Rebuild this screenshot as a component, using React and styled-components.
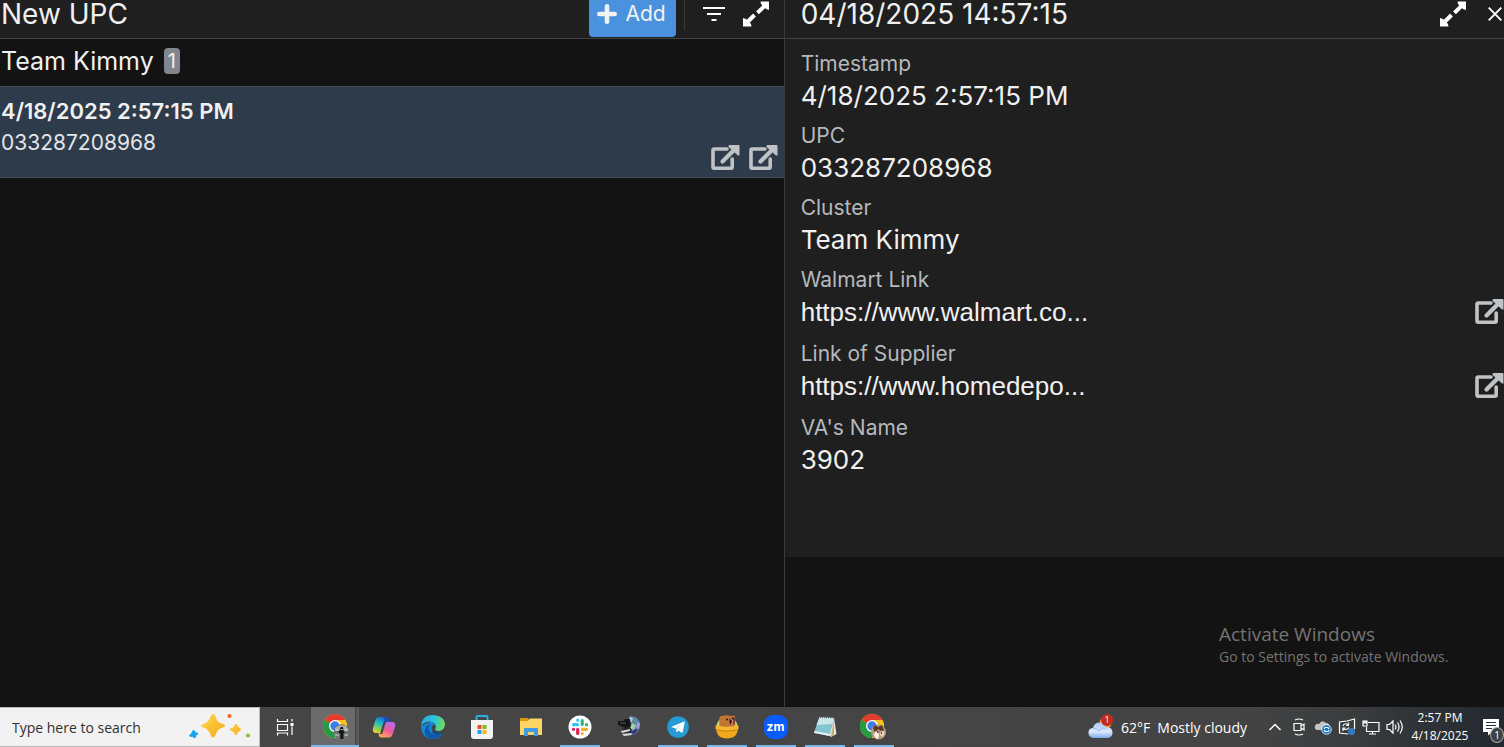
import React from 'react';
import styled, { createGlobalStyle, css } from 'styled-components';

const fields = [
  { label: 'Timestamp', value: '4/18/2025 2:57:15 PM' },
  { label: 'UPC', value: '033287208968' },
  { label: 'Cluster', value: 'Team Kimmy' },
  { label: 'Walmart Link', value: 'https://www.walmart.co...', link: true },
  { label: 'Link of Supplier', value: 'https://www.homedepo...', link: true },
  { label: "VA's Name", value: '3902' },
];

const ExternalIcon = () => (
  <svg width="30" height="28" viewBox="0 0 30 28" fill="none" stroke="currentColor" strokeWidth="3.6">
    <path d="M17 5H4.2Q3 5 3 6.2V23Q3 24.2 4.2 24.2H21Q22.2 24.2 22.2 23V15" strokeLinecap="round" />
    <path d="M12.5 17.5L24.5 5.5" strokeLinecap="round" strokeWidth="4.2" />
    <path d="M19 1H28.5Q29.500 1 29.500 2V11.500H28L18.300 2.800Z" fill="currentColor" stroke="none" />
  </svg>
);

const ExpandIcon = () => (
  <svg width="26" height="26" viewBox="0 0 26 26" fill="#fff">
    <path d="M17.5 0.5H26V9L23 8L18 3Z" />
    <path d="M0 17V25.5H8.5L8 23L3 18Z" />
    <path d="M14.500 11.800L21.500 4.800M4.500 21L11.500 14" stroke="#fff" strokeWidth="4" fill="none" />
  </svg>
);

const FilterIcon = () => (
  <svg width="22" height="16" viewBox="0 0 22 16" stroke="#fff" strokeWidth="2.2">
    <path d="M0 2H22M4 8H18M8.5 14H13.5" />
  </svg>
);

const PlusIcon = () => (
  <svg width="20" height="20" viewBox="0 0 20 20" stroke="#f2f2f2" strokeWidth="4.600" strokeLinecap="round">
    <path d="M10 2.300V17.700M2.300 10H17.700" />
  </svg>
);

const CloseIcon = () => (
  <svg width="14" height="14" viewBox="0 0 14 14" stroke="#fff" strokeWidth="1.9">
    <path d="M0.7 0.7L13.3 13.3M13.3 0.7L0.7 13.3" />
  </svg>
);

const TaskViewIcon = () => (
  <svg width="18" height="18" viewBox="0 0 18 18" fill="none" stroke="#fff" strokeWidth="1.2">
    <path d="M1.5 1V3.5H11.5V1M1.5 6.5H11.5V12.5H1.5ZM1.5 17.500V15H11.500V17.500M16 1V3.500M16 8.500V17" />
    <path d="M14.500 5H17.500V8H14.500Z" fill="#fff" stroke="none" />
  </svg>
);

const SparkleIcon = () => (
  <svg width="64" height="30" viewBox="0 0 64 30">
    <defs>
      <linearGradient id="gold" x1="0" y1="0" x2="1" y2="1">
        <stop offset="0" stopColor="#ffd84a" />
        <stop offset="1" stopColor="#f5a91c" />
      </linearGradient>
    </defs>
    <path d="M24 2Q26 2 27 6Q28.500 10.500 32.500 11.500Q36 12.500 36 13.500Q36 15 32 16Q28.500 17.500 27 21.500Q26 25.500 24 25.500Q22.500 25.500 21 21.500Q19.500 17.500 16 16Q12 15 12 13.500Q12 12.500 16 11.500Q19.500 10 21 6Q22.500 2 24 2Z" fill="url(#gold)" />
    <path d="M47 12Q48.500 16 52 17.500Q48.500 19 47 23Q45.500 19 41 17.500Q45.500 16 47 12Z" fill="url(#gold)" stroke="#fbbd22" />
    <path d="M4.500 18L6.500 20.500L9 21.500L7 23.500L6 26L3.500 24.500L0.500 24L2.500 21.500Z" fill="#14a5f5" stroke="#14a5f5" strokeLinejoin="round" />
    <circle cx="40.500" cy="4" r="2.100" fill="#ef6533" />
    <circle cx="59" cy="23.500" r="2.100" fill="#84c44b" />
  </svg>
);

const ChromeIcon = ({ cat }) => (
  <svg width="27" height="28" viewBox="0 0 27 28">
    <circle cx="12" cy="13" r="12" fill="#fbc116" />
    <path d="M12 13L1.600 7A12 12 0 0 1 22.400 7Z" fill="#e33b2e" />
    <path d="M12 13L1.600 7A12 12 0 0 0 12 25L17 16Z" fill="#259b45" />
    <path d="M12 7H22.400A12 12 0 0 1 12 25L17.200 16Z" fill="#fbc116" />
    <circle cx="12" cy="13" r="6" fill="#fff" />
    <circle cx="12" cy="13" r="4.700" fill="#3f7de8" />
    {cat ? (
      <g>
        <circle cx="18.500" cy="19" r="7.500" fill="#b69a80" />
        <path d="M13 15L15 12L18 14L22 12L24 17L21 18L18 16L15 20Z" fill="#5b3825" />
        <path d="M14 21Q15 17 18 19Q20 22 18 26Q14 25 14 21Z" fill="#fff0df" />
        <path d="M21 18L25 19L23 24L20 22Z" fill="#ead6bd" />
        <path d="M17 19H18.500M21 20H22" stroke="#252020" strokeWidth="1.500" />
      </g>
    ) : (
      <g>
        <circle cx="18.500" cy="19" r="7.700" fill="#6d7674" />
        <path d="M12 15L16 12.500L22 12.500L25 16L25 18L12 18Z" fill="#a8b5b2" />
        <path d="M17.500 14H20L20.500 17.500L22 19.500L20.500 20L20.500 26H17L17.500 21L15 19L16.500 17.500Z" fill="#17151b" />
        <path d="M12 22H16M21.500 22H25M13 17H15.500M22 17H24" stroke="#d4d6d6" strokeWidth="1.200" />
        <path d="M17.500 16.500H20" stroke="#c99a8c" />
      </g>
    )}
  </svg>
);

const CopilotIcon = () => (
  <svg width="24" height="24" viewBox="0 0 24 24">
    <defs>
      <linearGradient id="copA" x1="0.700" y1="0" x2="0.200" y2="1">
        <stop offset="0" stopColor="#1452cf" />
        <stop offset="0.450" stopColor="#25bfc3" />
        <stop offset="0.750" stopColor="#8dcf50" />
        <stop offset="1" stopColor="#ffd029" />
      </linearGradient>
      <linearGradient id="copB" x1="0.700" y1="0" x2="0.200" y2="1">
        <stop offset="0" stopColor="#bd69ed" />
        <stop offset="0.500" stopColor="#ed5a99" />
        <stop offset="1" stopColor="#ffaf50" />
      </linearGradient>
    </defs>
    <path d="M6.500 2H15Q17.300 2 18 5L18.500 7H15Q13 7 12.300 9.500L10 17.500Q9.200 19 6.500 18H4Q0 18 1 13L3.500 5Q4.500 2 6.500 2Z" fill="url(#copA)" />
    <path d="M14 7H20Q24 7 23 12L20.500 19.500Q19.500 22.500 17 22.500H9Q6.500 22 6.500 18Q9.300 18.500 10.500 15L12.500 9Z" fill="url(#copB)" />
    <path d="M12 2H15Q17.500 2 18.300 7H15Q13.500 7 12.500 9Z" fill="#1c4eb8" />
    <path d="M10 12L11.500 7.500Q12.200 6 14 6.500L10.500 18Q9.500 20 8 19Z" fill="#444" />
  </svg>
);

const EdgeIcon = () => (
  <svg width="24" height="24" viewBox="0 0 24 24">
    <defs>
      <linearGradient id="edgeA" x1="0" y1="0.300" x2="1" y2="0.500">
        <stop offset="0" stopColor="#28a9ec" />
        <stop offset="0.550" stopColor="#2dc5d6" />
        <stop offset="1" stopColor="#70df58" />
      </linearGradient>
    </defs>
    <path d="M0 11Q0 22 10 24Q18 25 21.500 18.500L14 17L13 5Z" fill="#1686d8" />
    <path d="M0 11Q1 0 12 0Q24 1 24 10Q23 16 16.500 16Q13 15.500 14.700 12.500Q15 7 9 6.500Q3 6.500 0 11Z" fill="url(#edgeA)" />
    <path d="M10 9Q6 12 9 17Q13 22 21.500 18.500Q17 24.500 11 24Q2 22 4 14Q5.500 9.500 10 9Z" fill="#0d5aab" />
    <path d="M14.800 11.500Q12.500 15.500 17 16.700Q20.500 17 23 15L21.500 17.500Q14 19.500 11.500 16Q9.500 12 12 10Q14 9.500 14.800 11.500Z" fill="#444" />
    <path d="M11.500 16Q15 19 21.500 17.500V18.500Q14 22 10.500 17Z" fill="#0c4c94" />
  </svg>
);

const StoreIcon = () => (
  <svg width="24" height="24" viewBox="0 0 24 24">
    <path d="M6.500 6V2Q6.500 1 7.500 1H16.500Q17.500 1 17.500 2V6" fill="none" stroke="#28aee5" strokeWidth="2" />
    <path d="M1 5H23V21Q23 24 20 24H4Q1 24 1 21Z" fill="#f2f2f2" />
    <path d="M7.500 10H11.500V14H7.500Z" fill="#ef4c24" />
    <path d="M12.500 10H16.500V14H12.500Z" fill="#7ebb16" />
    <path d="M7.500 15H11.500V19H7.500Z" fill="#1a9ee9" />
    <path d="M12.500 15H16.500V19H12.500Z" fill="#fbb70f" />
  </svg>
);

const FolderIcon = () => (
  <svg width="24" height="24" viewBox="0 0 24 24">
    <path d="M1 3H9L11 6H22V11H1Z" fill="#dc980c" />
    <path d="M1 6H9L11 3.500H23V20H1Z" fill="#fcd564" />
    <path d="M5 21V14Q5 13 6 13H18Q19 13 19 14V21H15V17H9V21Z" fill="#3f9be2" />
  </svg>
);

const SlackIcon = () => (
  <svg width="24" height="24" viewBox="0 0 24 24" strokeWidth="3.200" strokeLinecap="round">
    <circle cx="12" cy="12" r="11.500" fill="#fff" />
    <path d="M5.500 9.700H9.500M9.700 5.200V5.300" stroke="#36c5f0" />
    <path d="M14.200 5.500V9.500M18.500 9.700H18.600" stroke="#2eb67d" />
    <path d="M14.400 14.300H18.500M14.200 18.500V18.600" stroke="#ecb22e" />
    <path d="M9.700 14.400V18.500M5.400 14.300H5.500" stroke="#e01e5a" />
  </svg>
);

const WebcamIcon = () => (
  <svg width="24" height="24" viewBox="0 0 24 24">
    <path d="M13 1Q22 1 23 9Q23 17 17 20L12 18L10 8Z" fill="#6672a8" />
    <path d="M13 2L16 3L15 7L11 6Z" fill="#b9cbd2" />
    <path d="M17 2L21 5L19 9L16 7Z" fill="#4a9a9b" />
    <path d="M15 8L19 10L17 15L13 13Z" fill="#9bd0a6" />
    <path d="M20 7L23 8L22 14L19 13Z" fill="#a59ad8" />
    <path d="M17 15L21 14L18 19L14 18Z" fill="#33346f" />
    <path d="M1 6L7 6L8 4L13 4L14 11L11 14L6 12L1 10Z" fill="#131518" />
    <path d="M6 13L13 12L15 16L13 19L5 18Z" fill="#24262d" />
    <path d="M4 16L13 14V16L5 18ZM5 19L14 18L15 20L7 21Z" fill="#d5dbe0" />
    <path d="M3 8H9" stroke="#454d54" strokeWidth="1.200" />
  </svg>
);

const TelegramIcon = () => (
  <svg width="24" height="24" viewBox="0 0 24 24">
    <circle cx="12" cy="12" r="10.800" fill="#249bd2" />
    <path d="M5 12L18 6.500Q19 6.200 18.700 7.500L16.700 17.200Q16.400 18.200 15.400 17.500L12.500 15.400L11 17Q10.300 17.400 10.200 16.500L9.700 13.500Z" fill="#fff" />
    <path d="M9.700 13.500L16 8.800L11 14L10.500 16.500Z" fill="#b8d5e7" />
  </svg>
);

const BearIcon = () => (
  <svg width="24" height="26" viewBox="0 0 24 26">
    <circle cx="12" cy="13" r="10.500" fill="#cfe07a" />
    <path d="M4 14L4.500 3.500Q4.500 1.500 6.500 2Q12 0.500 16 2Q19.500 0.500 20 3L20.500 13Q12 17 4 14Z" fill="#c17434" />
    <path d="M14.500 5Q16.500 2.500 19.500 4V9Q18 11.500 15.500 10.500Q14 8 14.500 5Z" fill="#2a1712" />
    <path d="M16.500 6L18.500 5L18.500 9L17 10Z" fill="#e97f78" />
    <path d="M15.500 5H17M16 10H17.500" stroke="#fff" />
    <path d="M1 13Q12 16 23 13Q23 24.500 12 24.500Q1 24.500 1 13Z" fill="#f0a81c" />
    <path d="M0.500 12Q1 10.500 3 11.500Q12 14 21 11.500Q23 10.500 23.500 12V15Q12 18 0.500 15Z" fill="#f5b52e" />
    <path d="M2 16Q12 18.500 22 16" fill="none" stroke="#cf8210" />
    <circle cx="12" cy="5.500" r="1" fill="#201b17" />
  </svg>
);

const NotepadIcon = () => (
  <svg width="24" height="24" viewBox="0 0 24 24">
    <path d="M21 3L23.500 19L18 22L16 20Z" fill="#e9e5da" />
    <path d="M21 4L21 20L18 21.500Z" fill="#c2ae77" />
    <path d="M6.500 2L21 3L16.500 21L1 17.500Z" fill="#86c5cf" />
    <path d="M6.500 2L21 3L19.500 9L3.500 10Z" fill="#c9e6e9" />
    <path d="M1.500 16L17 19L16.500 21L1 18Z" fill="#e4f2f3" />
    <path d="M7 2.500H21" stroke="#5e6a6d" strokeWidth="1.500" strokeDasharray="1 1" />
  </svg>
);

const WeatherIcon = () => (
  <svg width="26" height="24" viewBox="0 0 26 24">
    <defs>
      <linearGradient id="cloud" x1="0" y1="0" x2="0" y2="1">
        <stop offset="0" stopColor="#a9c8fb" />
        <stop offset="0.600" stopColor="#dce9fd" />
        <stop offset="1" stopColor="#78a9ed" />
      </linearGradient>
    </defs>
    <circle cx="17.500" cy="8" r="6" fill="#f49b22" />
    <path d="M5 23Q0 22 0.500 17Q1 13 5 13Q6 8 11 7.500Q16 8 18 12Q24 12 24.500 17Q25 22 20 23Z" fill="url(#cloud)" />
    <path d="M5 13Q9 13 11 16Q14 12 18 13" stroke="#91b8f2" fill="none" />
  </svg>
);

const MeetIcon = () => (
  <svg width="14" height="18" viewBox="0 0 14 18" fill="none" stroke="#fff" strokeWidth="1.200">
    <path d="M2 5.500H9V12.500H2ZM9 8L12 6V12L9 10M3 2Q7 0 11 2M3 16Q7 18 11 16" />
  </svg>
);

const CloudSyncIcon = () => (
  <svg width="18" height="16" viewBox="0 0 18 16">
    <path d="M3 11Q0 10 1 7Q2 4 5 5Q8 0 12 4Q16 4 16 9V11Z" fill="#c5c5c5" />
    <circle cx="12.500" cy="10.500" r="4.800" fill="#1676c5" stroke="#fff" strokeWidth="0.800" />
    <path d="M10 10L11 8.500H14L15 10M15 11L14 12.500H11L10 11" fill="none" stroke="#fff" strokeWidth="1.200" />
  </svg>
);

const UpdateIcon = () => (
  <svg width="18" height="18" viewBox="0 0 18 18" fill="none" stroke="#fff" strokeWidth="1.200">
    <path d="M9 3L1.500 4V15L10 16M9 3L16.500 1V11M5 8Q6 5 9 6L10.500 7M10.500 4.500V7.500H8M11 9.500Q9 12.500 6 11L5 10M5 13V10H7.500" />
    <circle cx="13.500" cy="13.500" r="3.500" fill="#347dc6" stroke="none" />
  </svg>
);

const NetworkIcon = () => (
  <svg width="18" height="16" viewBox="0 0 18 16" fill="none" stroke="#fff" strokeWidth="1.200">
    <path d="M6 3.500H17V12.500H4.500V8M7 15H14M10.500 12.500V15M1 2H5V7H1ZM2.200 2V4H3.800V2" />
  </svg>
);

const SpeakerIcon = () => (
  <svg width="18" height="16" viewBox="0 0 18 16" fill="none" stroke="#fff" strokeWidth="1.200">
    <path d="M1 5.500H3.500L7 2V14L3.500 10.500H1ZM9 5.500Q11 8 9 10.500M11.500 3.500Q14.500 8 11.500 12.500M14 1.500Q18.500 8 14 14.500" />
  </svg>
);

const ChevronIcon = () => (
  <svg width="14" height="10" viewBox="0 0 14 10" fill="none" stroke="#fff" strokeWidth="1.500">
    <path d="M1.500 8L7 2.500L12.500 8" />
  </svg>
);

const NoticeIcon = () => (
  <svg width="18" height="18" viewBox="0 0 18 18">
    <path d="M1 1H17V14H10L6 17.500V14H1Z" fill="#fff" />
    <path d="M4 4.500H14M4 7.500H14M4 10.500H10" stroke="#2d3135" strokeWidth="1.200" />
  </svg>
);

const apps = [
  { name: 'Google Chrome', icon: <ChromeIcon />, active: true },
  { name: 'Copilot', icon: <CopilotIcon /> },
  { name: 'Microsoft Edge', icon: <EdgeIcon /> },
  { name: 'Microsoft Store', icon: <StoreIcon /> },
  { name: 'File Explorer', icon: <FolderIcon /> },
  { name: 'Slack', icon: <SlackIcon />, open: true },
  { name: 'Webcam', icon: <WebcamIcon /> },
  { name: 'Telegram', icon: <TelegramIcon />, open: true },
  { name: 'Bear', icon: <BearIcon />, open: true },
  { name: 'Zoom', zoom: true, open: true },
  { name: 'Notepad', icon: <NotepadIcon />, open: true },
  { name: 'Chrome profile', icon: <ChromeIcon cat />, open: true },
];

const App = () => {
  return (
    <Page>
      <GlobalStyle />
      <Main>
        <ListPane>
          <PaneHeader>
            <Title>New UPC</Title>
            <AddButton>
              <PlusIcon />
              Add
            </AddButton>
            <HeaderTools>
              <IconButton aria-label="Filter"><FilterIcon /></IconButton>
              <IconButton aria-label="Expand list"><ExpandIcon /></IconButton>
            </HeaderTools>
          </PaneHeader>
          <GroupHeader>
            Team Kimmy
            <Count>1</Count>
          </GroupHeader>
          <Record>
            <RecordText>
              <strong>4/18/2025 2:57:15 PM</strong>
              <span>033287208968</span>
            </RecordText>
            <RecordLinks>
              <IconLink href="#walmart" aria-label="Walmart Link"><ExternalIcon /></IconLink>
              <IconLink href="#supplier" aria-label="Link of Supplier"><ExternalIcon /></IconLink>
            </RecordLinks>
          </Record>
        </ListPane>
        <DetailPane>
          <PaneHeader $inset>
            <Title>04/18/2025 14:57:15</Title>
            <IconButton aria-label="Expand details"><ExpandIcon /></IconButton>
            <CloseButton aria-label="Close"><CloseIcon /></CloseButton>
          </PaneHeader>
          <Fields>
            {fields.map(field => (
              <Field key={field.label} $link={field.link}>
                <dt>{field.label}</dt>
                <Value $link={field.link}>
                  {field.value}
                  {field.link && (
                    <IconLink href="#open" aria-label={field.label}><ExternalIcon /></IconLink>
                  )}
                </Value>
              </Field>
            ))}
          </Fields>
        </DetailPane>
        <Watermark>
          <h2>Activate Windows</h2>
          <p>Go to Settings to activate Windows.</p>
        </Watermark>
      </Main>
      <Taskbar>
        <SearchBox>
          <SearchInput type="text" aria-label="Search" placeholder="Type here to search" />
          <SparkleIcon />
        </SearchBox>
        <TaskView aria-label="Task View"><TaskViewIcon /></TaskView>
        {apps.map(app => (
          <AppButton key={app.name} aria-label={app.name} $active={app.active} $open={app.open}>
            {app.zoom ? <ZoomLogo>zm</ZoomLogo> : app.icon}
          </AppButton>
        ))}
        <Weather>
          <WeatherBadge>
            <WeatherIcon />
            <Alert>1</Alert>
          </WeatherBadge>
          <span>62°F</span>
          <span>Mostly cloudy</span>
        </Weather>
        <Tray>
          <TrayButton aria-label="Show hidden icons"><ChevronIcon /></TrayButton>
          <TrayButton aria-label="Meet Now"><MeetIcon /></TrayButton>
          <TrayButton aria-label="OneDrive"><CloudSyncIcon /></TrayButton>
          <TrayButton aria-label="Updates"><UpdateIcon /></TrayButton>
          <TrayButton aria-label="Network"><NetworkIcon /></TrayButton>
          <TrayButton aria-label="Volume"><SpeakerIcon /></TrayButton>
        </Tray>
        <Clock>
          <span>2:57 PM</span>
          <span>4/18/2025</span>
        </Clock>
        <Notices aria-label="Notifications">
          <NoticeIcon />
          <NoticeCount>1</NoticeCount>
        </Notices>
      </Taskbar>
    </Page>
  );
};

export default App;

const GlobalStyle = createGlobalStyle`
  * {
    box-sizing: border-box;
  }

  body {
    margin: 0;
    background-color: #131313;
    color: #f0f0f0;
    font-family: Inter, 'Liberation Sans', sans-serif;
  }

  h1, h2, p, dl, dd {
    margin: 0;
    font-weight: 400;
  }

  button {
    border: 0;
    padding: 0;
    background: none;
    color: inherit;
    font-family: inherit;
  }

  svg {
    display: block;
    flex-shrink: 0;
  }
`;

const Page = styled.div`
  display: flex;
  flex-direction: column;
  min-height: 100vh;
`;

const Main = styled.main`
  position: relative;
  display: grid;
  grid-template-columns: 12fr 11fr;
  flex: 1;
`;

const ListPane = styled.section`
  border-right: 1px solid #3b3b3b;
`;

const DetailPane = styled.section`
  min-width: 0;
`;

const PaneHeader = styled.header`
  display: flex;
  align-items: flex-start;
  height: 39px;
  padding-left: ${props => (props.$inset ? '16px' : '1px')};
  border-bottom: 1px solid #434343;
  background-color: #1f1f1f;
`;

const Title = styled.h1`
  flex: 1;
  font-size: 28px;
  line-height: 28px;
`;

const AddButton = styled.button`
  display: flex;
  gap: 8px;
  align-items: center;
  height: 37px;
  padding: 0 10px 9px 8px;
  border-radius: 0 0 4px 4px;
  background-color: #4a92de;
  color: #f2f2f2;
  font-size: 21px;
  line-height: 28px;
`;

const HeaderTools = styled.div`
  display: flex;
  gap: 18px;
  height: 30px;
  margin-left: 8px;
  padding: 0 15px 0 18px;
  border-left: 1px solid #3b3b3b;
`;

const IconButton = styled.button`
  display: flex;
  align-items: center;
  height: 28px;
`;

const CloseButton = styled(IconButton)`
  margin: 0 2px 0 22px;
`;

const GroupHeader = styled.div`
  display: flex;
  align-items: center;
  gap: 10px;
  height: 47px;
  padding: 0 1px 4px;
  font-size: 25px;
`;

const Count = styled.span`
  padding: 0 4px;
  border-radius: 4px;
  background-color: #81858d;
  font-size: 20px;
  line-height: 26px;
`;

const Record = styled.article`
  display: flex;
  justify-content: space-between;
  height: 92px;
  padding: 8px 6px 5px 1px;
  border: solid #4b4f53;
  border-width: 1px 0;
  background-color: #2d3b4b;
`;

const RecordText = styled.div`
  display: flex;
  flex-direction: column;
  font-size: 21px;
  line-height: 32px;

  strong {
    font-size: 22px;
    font-weight: 600;
  }

  span {
    color: #e2e5e8;
  }
`;

const RecordLinks = styled.div`
  display: flex;
  gap: 8px;
  align-self: flex-end;
`;

const IconLink = styled.a`
  color: #c0c3c6;
`;

const Fields = styled.dl`
  padding: 9px 0 73px 16px;
  background-color: #1f1f1f;
`;

const Field = styled.div`
  margin-bottom: ${props => (props.$link ? '10px' : '8px')};

  dt {
    color: #b4b9be;
    font-size: 21px;
    line-height: 32px;
  }
`;

const Value = styled.dd`
  display: flex;
  align-items: center;
  justify-content: space-between;
  height: 32px;
  font-family: ${props => (props.$link ? "'Liberation Sans', sans-serif" : 'inherit')};
  font-size: 26px;
  line-height: 32px;
`;

const Watermark = styled.aside`
  position: absolute;
  right: 49px;
  bottom: 40px;
  min-width: 236px;
  color: #747474;
  font-family: 'Open Sans', sans-serif;

  h2 {
    font-size: 19px;
    line-height: 26px;
  }

  p {
    font-size: 14px;
    line-height: 20px;
  }
`;

const Taskbar = styled.footer`
  display: flex;
  height: 40px;
  background: linear-gradient(90deg, #464646 0%, #444 82%, #3a3c3e 90%, #22282e 100%);
  color: #fff;
  font-family: 'Open Sans', sans-serif;
  font-size: 14px;
`;

const SearchBox = styled.div`
  display: flex;
  align-items: center;
  justify-content: space-between;
  width: 260px;
  padding: 0 6px 0 12px;
  border: solid #b9b9b9;
  border-width: 1px 1px 1px 0;
  background-color: #f2f2f2;
`;

const SearchInput = styled.input`
  flex: 1;
  min-width: 0;
  padding: 0;
  border: 0;
  background: none;
  font: inherit;

  &::placeholder {
    color: #303030;
    opacity: 1;
  }
`;

const TaskView = styled.button`
  display: flex;
  align-items: center;
  justify-content: center;
  width: 50px;
`;

const AppButton = styled.button`
  display: flex;
  align-items: center;
  justify-content: center;
  width: 49px;
  background: linear-gradient(#76b9ed, #76b9ed) center bottom / 40px 2px no-repeat;
  ${props => !props.$open && !props.$active && css`background: none;`}
  ${props => props.$active && css`
    padding-left: 4px;
    background:
      linear-gradient(#76b9ed, #76b9ed) right bottom / 48px 2px no-repeat,
      linear-gradient(90deg, transparent 1px, #6b6b6b 1px, #6b6b6b 45px, #454545 45px, #454545 46px, #5a5a5a 46px);
  `}
`;

const ZoomLogo = styled.span`
  width: 24px;
  border-radius: 9px;
  background-color: #0b5cff;
  color: #fff;
  font-family: Inter, sans-serif;
  font-size: 12px;
  font-weight: 700;
  line-height: 24px;
  text-align: center;
`;

const Weather = styled.div`
  display: flex;
  align-items: center;
  gap: 7px;
  margin-left: auto;
  white-space: nowrap;
`;

const WeatherBadge = styled.div`
  position: relative;
`;

const Alert = styled.span`
  position: absolute;
  top: -1px;
  right: 1px;
  width: 12px;
  border-radius: 50%;
  background-color: #c42b1c;
  font-size: 9px;
  line-height: 12px;
  text-align: center;
`;

const Tray = styled.div`
  display: flex;
  margin-left: 16px;
`;

const TrayButton = styled.button`
  display: flex;
  align-items: center;
  justify-content: center;
  width: 24px;
`;

const Clock = styled.div`
  display: flex;
  flex-direction: column;
  justify-content: center;
  width: 66px;
  font-size: 12px;
  line-height: 18px;
  text-align: center;
`;

const Notices = styled.button`
  position: relative;
  display: flex;
  align-items: center;
  padding: 0 4px 0 9px;
`;

const NoticeCount = styled.span`
  position: absolute;
  right: 0;
  bottom: 4px;
  width: 14px;
  border: 1px solid #aaa;
  border-radius: 50%;
  background-color: #3e4246;
  font-size: 10px;
  line-height: 14px;
  text-align: center;
`;
